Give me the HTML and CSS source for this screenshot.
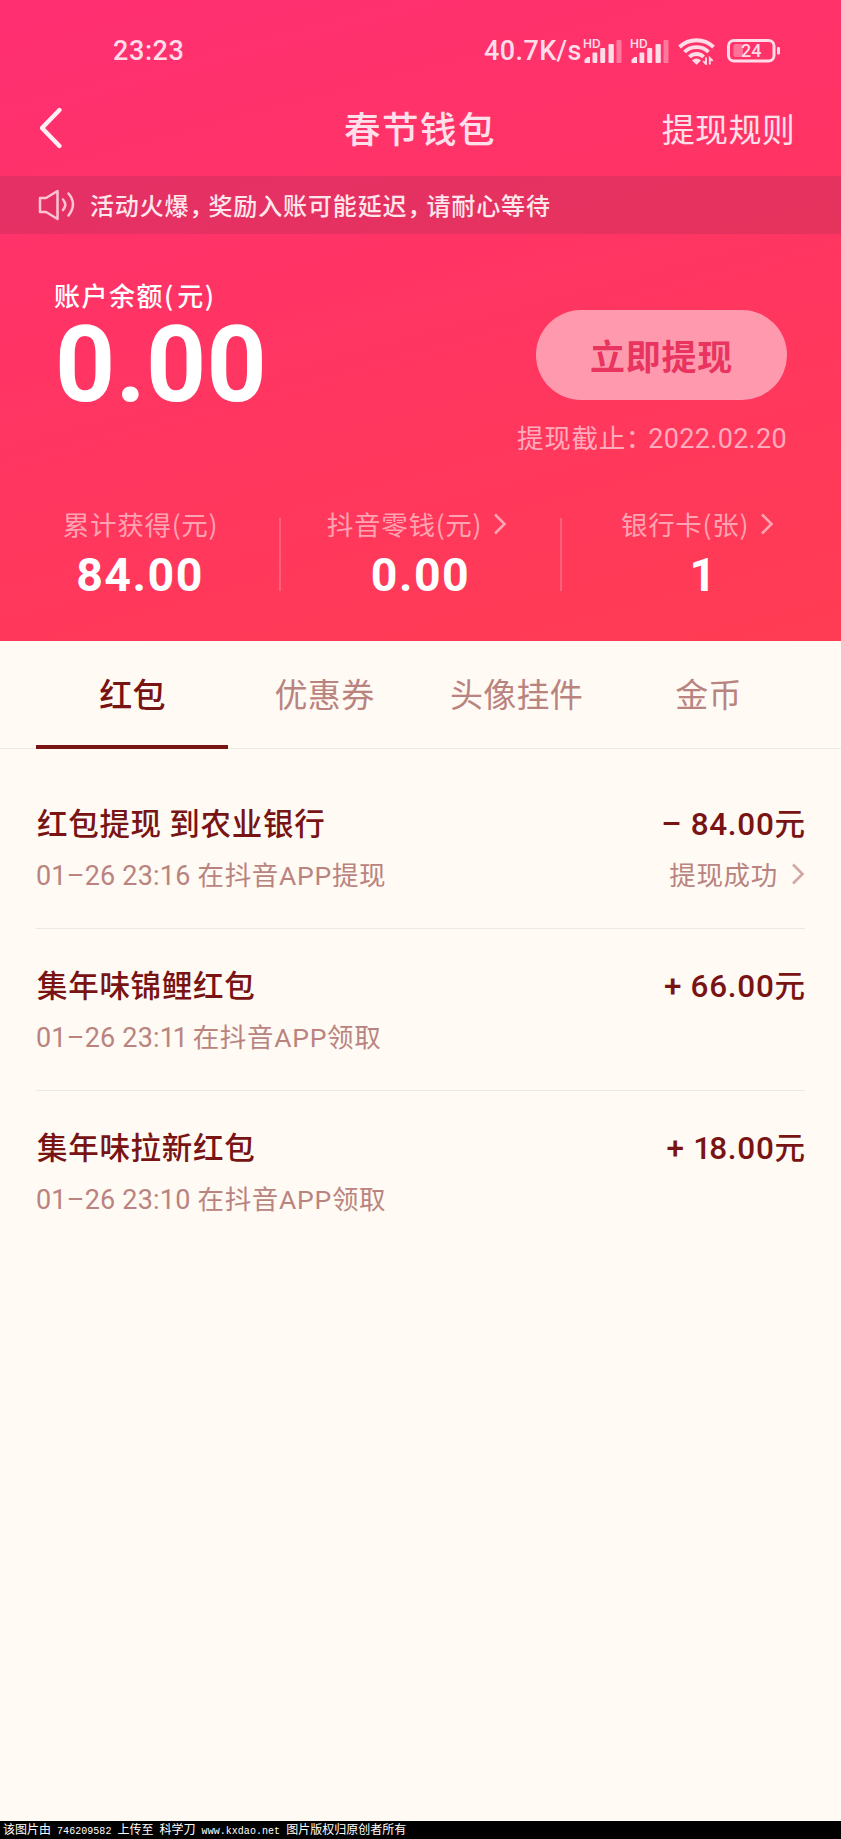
FILE: index.html
```html
<!DOCTYPE html>
<html lang="zh-CN">
<head>
<meta charset="utf-8">
<title>春节钱包</title>
<link rel="stylesheet" href="styles.css">
</head>
<body>
<div class="page">
  <header class="hero">
    <div class="status">
      <span class="clock">23:23</span>
      <div class="status-right">
        <span class="speed">40.7K/s</span>
        <svg class="signal" width="40" height="28" viewBox="0 0 40 28">
          <text class="hd" x="0" y="10.500">HD</text>
          <g fill="currentColor"><path d="M1.500 26v-3.500l3-2.500h2.500v6z"/><rect x="9.500" y="15.500" width="4.800" height="10.500" rx="1"/><rect x="17.200" y="11" width="5" height="15" rx="1"/><rect x="25.500" y="7" width="5.300" height="19" rx="1"/><rect x="33.500" y="3" width="5" height="23" rx="1" opacity=".42"/></g>
        </svg>
        <svg class="signal second" width="40" height="28" viewBox="0 0 40 28">
          <text class="hd" x="0" y="10.500">HD</text>
          <g fill="currentColor"><path d="M1.500 26v-3.500l3-2.500h2.500v6z"/><rect x="9.500" y="15.500" width="4.800" height="10.500" rx="1"/><rect x="17.200" y="11" width="5" height="15" rx="1"/><rect x="25.500" y="7" width="5.300" height="19" rx="1"/><rect x="33.500" y="3" width="5" height="23" rx="1" opacity=".42"/></g>
        </svg>
        <svg class="wifi" width="37" height="28" viewBox="0 0 37 28">
          <g fill="none" stroke="currentColor" stroke-width="3.800"><path d="M1.500 10C11 1 26 1 35.500 10"/><path d="M6.500 15C13 8.500 24 8.500 30.500 15"/><path d="M11.500 20C15 16 22 16 25.500 20"/></g>
          <path d="M14 23.500q4.500-4 9 0l-4.500 4.300z" fill="currentColor"/>
          <path d="M28 20.500v6.500l-2.800-2.800M31.800 27.500v-6.500l2.800 2.800" fill="none" stroke="currentColor" stroke-width="1.900"/>
        </svg>
        <svg class="battery" width="54" height="26" viewBox="0 0 54 26">
          <rect x="1.500" y="2.500" width="45.500" height="20.500" rx="5.500" fill="none" stroke="currentColor" stroke-width="3"/>
          <rect x="6.500" y="6" width="9.500" height="13" rx="2" fill="currentColor" opacity=".38"/>
          <rect x="50" y="9" width="3" height="7.500" rx="1.300" fill="currentColor"/>
          <text class="level" x="14" y="19">24</text>
        </svg>
      </div>
    </div>
    <nav class="nav">
      <svg class="back" width="26" height="44" viewBox="0 0 26 44"><path d="M22.500 4L5 22l17.500 18" fill="none" stroke="currentColor" stroke-width="4.400" stroke-linecap="round" stroke-linejoin="round"/></svg>
      <h1 class="title">春节钱包</h1>
      <a class="rules">提现规则</a>
    </nav>
    <div class="notice">
      <svg class="horn" width="40" height="32" viewBox="0 0 40 32"><g fill="none" stroke="currentColor" stroke-width="2.500" stroke-linejoin="round" stroke-linecap="round"><path d="M3 9h6L20.500 2v28L9 23H3z"/><path d="M26 10.500q4.500 5 0 10.500"/><path d="M31.500 4.500q9 10.500 0 22"/></g></svg>
      <p class="notice-text">活动火爆<span class="comma">，</span>奖励入账可能延迟<span class="comma">，</span>请耐心等待</p>
    </div>
    <section class="balance">
      <div class="amount-box">
        <p class="label">账户余额<span class="paren">(</span>元<span class="paren">)</span></p>
        <p class="amount">0.00</p>
      </div>
      <div class="action">
        <button class="withdraw">立即提现</button>
        <p class="deadline">提现截止<span class="colon">：</span><span class="date">2022.02.20</span></p>
      </div>
    </section>
    <section class="stats">
      <div class="stat"><p class="stat-label">累计获得(元)</p><p class="stat-value">84.00</p></div>
      <div class="stat"><p class="stat-label linked">抖音零钱(元)<svg class="arrow" width="14" height="22" viewBox="0 0 14 22"><path d="M2 1.500L11.500 11 2 20.500"/></svg></p><p class="stat-value">0.00</p></div>
      <div class="stat"><p class="stat-label linked">银行卡(张)<svg class="arrow" width="14" height="22" viewBox="0 0 14 22"><path d="M2 1.500L11.500 11 2 20.500"/></svg></p><p class="stat-value single">1</p></div>
    </section>
  </header>
  <div class="tabs">
    <a class="tab active">红包</a><a class="tab">优惠券</a><a class="tab">头像挂件</a><a class="tab">金币</a>
  </div>
  <ul class="list">
    <li class="row">
      <div class="line"><span class="name">红包提现 到农业银行</span><span class="money"><span class="num">– 84.00</span>元</span></div>
      <div class="line sub"><span><span class="time">01–26 23:16 </span>在抖音<span class="app">APP</span>提现</span><span class="state">提现成功<svg class="arrow" width="14" height="22" viewBox="0 0 14 22"><path d="M2 1.500L11.500 11 2 20.500"/></svg></span></div>
    </li>
    <li class="row">
      <div class="line"><span class="name">集年味锦鲤红包</span><span class="money"><span class="num">+ 66.00</span>元</span></div>
      <div class="line sub"><span><span class="time">01–26 23:<span class="ones">11</span> </span>在抖音<span class="app">APP</span>领取</span></div>
    </li>
    <li class="row">
      <div class="line"><span class="name">集年味拉新红包</span><span class="money"><span class="num">+ <span class="ones">1</span>8.00</span>元</span></div>
      <div class="line sub"><span><span class="time">01–26 23:10 </span>在抖音<span class="app">APP</span>领取</span></div>
    </li>
  </ul>
  <footer class="credit">该图片由<span class="mono"> 746209582 </span>上传至<span class="mono"> </span>科学刀<span class="mono"> www.kxdao.net </span>图片版权归原创者所有</footer>
</div>
</body>
</html>
```
FILE: styles.css
```css
* { box-sizing: border-box; margin: 0; padding: 0; }
body {
  font-family: "Noto Sans CJK SC", sans-serif;
  background: #fffaf3;
}
.page {
  display: flex;
  flex-direction: column;
  width: 841px;
  height: 1839px;
  overflow: hidden;
}
.hero {
  height: 641px;
  background: linear-gradient(165deg, #ff2f72 0%, #ff3562 50%, #ff3c53 100%);
  color: #fff;
}
.status {
  display: flex;
  justify-content: space-between;
  align-items: center;
  height: 100px;
  padding: 1px 60px 0 113px;
  color: #ffdce8;
  font: 500 27px/32px Roboto, sans-serif;
}
.clock { letter-spacing: 0.600px; }
.status-right { display: flex; align-items: center; }
.speed { width: 99px; letter-spacing: 0.400px; }
.second { margin-left: 7px; }
.wifi { margin-left: 8px; }
.battery { margin-left: 12px; }
.hd { font: 600 12px Inter, sans-serif; fill: currentColor; }
.level { font: 500 18px Roboto, sans-serif; fill: currentColor; }
.nav {
  display: grid;
  grid-template-columns: 1fr auto 1fr;
  align-items: center;
  height: 76px;
  padding: 0 46px 24px 37px;
  color: #ffe0ea;
}
.back { color: #fff0f5; }
.title {
  margin-left: 8px;
  font-size: 36.500px;
  font-weight: 500;
  line-height: 56px;
  letter-spacing: 1.500px;
}
.rules { justify-self: end; font-size: 33px; line-height: 56px; letter-spacing: 0.300px; }
.notice {
  display: flex;
  align-items: center;
  height: 58px;
  padding-left: 37px;
  background: rgba(70, 45, 70, 0.14);
  color: #ffe6ec;
}
.horn { color: #ffc4d3; }
.notice-text { margin: -1px 0 0 13px; font-size: 24px; font-weight: 500; line-height: 36px; letter-spacing: 0.870px; }
.comma { letter-spacing: -5px; }
.balance {
  display: flex;
  justify-content: space-between;
  height: 270px;
  padding: 41px 54px 0 54px;
}
.label { font-size: 26px; font-weight: 500; line-height: 40px; letter-spacing: 1.500px; }
.paren { letter-spacing: 4px; }
.amount { margin: 4px 0 0 1px; font: 700 105px/94px Roboto, sans-serif; letter-spacing: 0.200px; }
.action { display: flex; flex-direction: column; align-items: flex-end; padding-top: 35px; }
.withdraw {
  width: 251px;
  height: 90px;
  border: 0;
  border-radius: 45px;
  background: #ff9aae;
  color: #e8345e;
  font: 700 35px/88px "Noto Sans CJK SC", sans-serif;
  letter-spacing: 0.800px;
}
.deadline { margin-top: 17px; font-size: 26.500px; line-height: 40px; letter-spacing: 0.700px; white-space: nowrap; color: #ffabbd; }
.colon { letter-spacing: -4px; }
.date { font-family: Roboto, sans-serif; font-size: 27px; letter-spacing: 0.300px; }
.stats { display: grid; grid-template-columns: 280px 281px 280px; }
.stat { position: relative; height: 110px; text-align: center; }
.stat + .stat::before {
  content: "";
  position: absolute;
  left: -1px;
  top: 14px;
  width: 2px;
  height: 73px;
  background: rgba(255, 255, 255, 0.2);
}
.stat-label { padding-left: 1px; font-size: 26.500px; line-height: 40px; letter-spacing: 0.700px; color: #ffa3b2; }
.linked { display: flex; justify-content: center; align-items: center; padding-right: 8px; }
.arrow { margin-left: 11px; fill: none; stroke: currentColor; stroke-width: 2.600; }
.stat-value { font: 700 46.500px/62px Roboto, sans-serif; letter-spacing: 1.500px; }
.single { padding-left: 5px; }
.tabs {
  display: grid;
  grid-template-columns: repeat(4, 192px);
  height: 108px;
  padding: 0 36px;
  border-bottom: 1px solid #ece8e3;
}
.tab {
  height: 108px;
  padding-left: 1px;
  text-align: center;
  font-size: 33px;
  line-height: 105px;
  letter-spacing: 0.300px;
  color: #b98480;
}
.active { border-bottom: 4px solid #781414; color: #781414; font-weight: 500; }
.list { flex: 1; padding: 17px 36px 0; list-style: none; }
.row { height: 162px; padding-top: 32px; }
.row + .row { padding-top: 31px; border-top: 1px solid #ece8e3; }
.line { display: flex; justify-content: space-between; height: 48px; line-height: 48px; color: #781414; }
.name { padding-left: 1px; font-size: 30.500px; font-weight: 500; letter-spacing: 0.700px; }
.money { font-size: 30.500px; font-weight: 500; }
.num { font-family: Roboto, sans-serif; font-size: 31.500px; letter-spacing: 0.700px; }
.num .ones { letter-spacing: -2px; }
.sub { margin-top: 4px; font-size: 26.500px; letter-spacing: 0.700px; color: #b98480; }
.time, .app { font-family: Roboto, sans-serif; }
.time { font-size: 27px; letter-spacing: 0.200px; }
.time .ones { letter-spacing: -2.200px; }
.state { display: flex; align-items: center; }
.state .arrow { margin-left: 13px; color: #d0a8a4; }
.credit {
  height: 18px;
  padding-left: 3px;
  background: #000;
  color: #fff;
  font-size: 12px;
  line-height: 16px;
  white-space: pre;
}
.mono { font: 10px/16px "Liberation Mono", monospace; letter-spacing: 0.040px; }
```
